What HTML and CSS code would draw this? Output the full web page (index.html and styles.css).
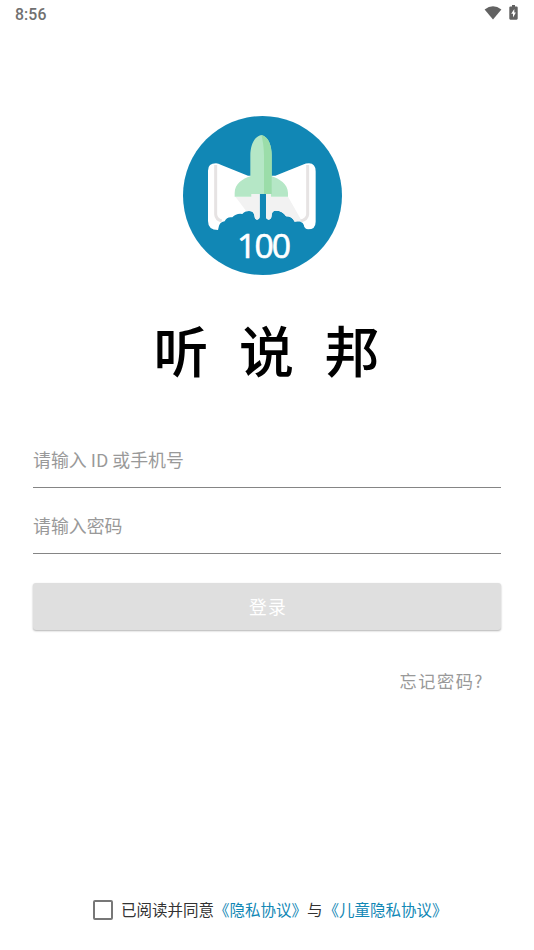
FILE: index.html
```html
<!DOCTYPE html>
<html lang="zh-CN">
<head>
<meta charset="utf-8">
<title>听说邦</title>
<link rel="stylesheet" href="styles.css">
</head>
<body>
<main class="screen">
  <header class="status">
    <span class="clock">8:56</span>
    <span class="indicators">
      <svg class="wifi" viewBox="0 0 18 14"><path d="M0.6 3.6Q9-3 17.4 3.6L9 13.6Z"/></svg>
      <svg class="battery" viewBox="0 0 9 15"><path fill-rule="evenodd" d="M3 0h3v1.5h1.6q1.1 0 1.1 1.1v11q0 1.1-1.1 1.1H1.4Q.3 14.700.3 13.600v-11q0-1.100 1.100-1.100H3ZM5.300 4L2.200 8.800H4V12.500L6.900 7.500H5.300Z"/></svg>
    </span>
  </header>
  <svg class="logo" viewBox="33 30 477 477">
    <circle cx="271.500" cy="268.500" r="238.500" fill="#1187b5"/>
    <path fill="#fff" d="M108 194Q108 172 132 172Q139 172 148 177L228 209H310L392 176Q402 172 411 172Q431 173 431 196V347Q431 370 408 370Q401 370 397 363Q395 350 383 346Q374 344 368 347Q360 331 342 331Q332 313 309 314Q300 315 299 328Q298 341 290 341Q282 341 282 331V264H263V331Q263 341 255 341Q248 341 247 328Q245 315 231 315Q218 315 211 324Q193 321 181 334Q165 331 158 346Q146 347 141 359L138 372Q108 372 108 345Z"/>
    <path fill="#f2f2f2" d="M190 272H238V264H263V331Q263 341 255 341Q248 341 247 328Q245 315 231 315L223 316Q205 291 190 272ZM282 264H297V272H348L390 346L368 347Q360 331 342 331Q332 313 309 314Q300 315 299 328Q298 341 290 341Q282 341 282 331Z"/>
    <path class="fold" d="M131 177V325Q132 340 149 345M407 177V325Q406 340 386 345"/>
    <path fill="#b5e7c6" d="M268 87C244 92 235 122 235 147V211C212 218 188 234 188 261V272H238V264H297V272H348V261C348 234 321 218 299 211V147C299 122 291 92 268 87Z"/>
    <path fill="#9bdda9" d="M268 87C291 92 299 122 299 147V264H276V147Q275 111 268 87Z"/>
    <text class="score" x="195" y="457" textLength="162">100</text>
  </svg>
  <h1 class="title">听说邦</h1>
  <form class="login">
    <div class="field">请输入 ID 或手机号</div>
    <div class="field">请输入密码</div>
    <button class="submit" type="button">登录</button>
    <a class="forgot">忘记密码?</a>
  </form>
  <footer class="agreement">
    <span class="checkbox"></span>
    <span>已阅读并同意<a>《隐私协议》</a>与<a>《儿童隐私协议》</a></span>
  </footer>
</main>
</body>
</html>
```
FILE: styles.css
```css
* { box-sizing: border-box; }
body { margin: 0; background: #fff; font-family: "Noto Sans CJK SC", sans-serif; }
.screen { height: 950px; display: flex; flex-direction: column; overflow: hidden; }
.status { height: 28px; flex: none; padding: 0 16px 0 15px; display: flex; align-items: center; justify-content: space-between; }
.clock { padding-top: 1px; font: 500 15.800px/28px Roboto, sans-serif; color: #707070; letter-spacing: .1px; }
.indicators { display: flex; align-items: center; gap: 7px; fill: #626262; margin-top: -3px; }
.wifi { width: 18px; height: 14px; }
.battery { width: 9px; height: 15px; }
.logo { display: block; flex: none; width: 159px; height: 159px; margin: 88px 0 0 183px; }
.fold { fill: none; stroke: #e6e3e3; stroke-width: 9; }
.score { font: 400 101px "Open Sans", sans-serif; fill: #fff; stroke: #fff; stroke-width: 2px; }
.title { margin: 33px 0 0 153.500px; font-size: 55px; line-height: 80px; font-weight: 500; letter-spacing: 30.500px; white-space: nowrap; }
.login { margin: 51px 33px 0; display: flex; flex-direction: column; }
.field { height: 66px; padding-top: 24px; border-bottom: 1px solid #858585; font-size: 17.900px; line-height: 26px; font-weight: 400; color: #999; }
.field:first-child { height: 49px; padding-top: 7px; }
.submit { height: 47px; margin-top: 29px; padding: 0 0 1px 2px; border: 0; border-radius: 3px; background: #dfdfdf; color: #fff; font: 400 17.800px/26px "Noto Sans CJK SC", sans-serif; letter-spacing: 1.200px; box-shadow: 0 1px 2px rgba(0,0,0,.3); }
.forgot { align-self: flex-end; margin: 38px 17px 0 0; font-size: 17.200px; line-height: 26px; font-weight: 400; letter-spacing: 1.500px; color: #999; }
.agreement { margin: auto 0 28px 93px; display: flex; align-items: center; gap: 8px; font-size: 15.500px; line-height: 26px; color: #333; white-space: nowrap; }
.checkbox { width: 20px; height: 20px; margin-top: 2px; border: 2px solid #777; border-radius: 2px; }
.agreement a { color: #1187b5; }
.agreement a + a { margin-left: 1px; }
```
